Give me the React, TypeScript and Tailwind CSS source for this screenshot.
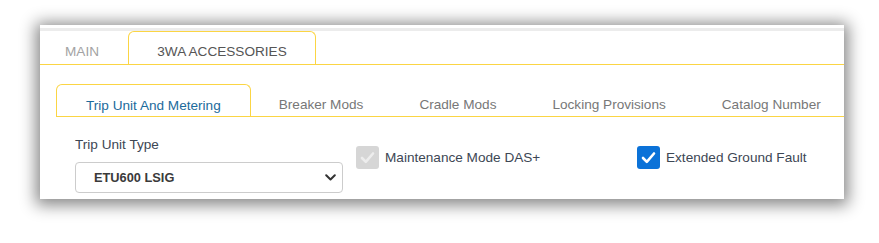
import React from 'react';

const subTabs = ['Breaker Mods', 'Cradle Mods', 'Locking Provisions', 'Catalog Number'];

const CheckMark = ({ color }: { color: string }) => (
  <svg width="15" height="13" viewBox="0 0 15 13" fill="none">
    <path d="M2 7l3.8 3.8L13 2.5" stroke={color} strokeWidth="2.6" strokeLinecap="round" strokeLinejoin="round" />
  </svg>
);

const Check = ({ checked, disabled, label }: { checked: boolean; disabled?: boolean; label: string }) => (
  <div className="flex items-center gap-[6px]">
    <span
      className={
        disabled
          ? 'w-[23px] h-[23px] rounded-[3px] bg-[#d6d6d6] flex items-center justify-center'
          : 'w-[23px] h-[23px] rounded-[3px] bg-[#0b72d8] flex items-center justify-center'
      }
    >
      {checked && <CheckMark color={disabled ? '#ededed' : '#ffffff'} />}
    </span>
    <span className="text-[#3d4754] leading-[16px] whitespace-nowrap">{label}</span>
  </div>
);

export default function App() {
  return (
    <div className="min-h-screen bg-white pt-[25px] pl-[40px] font-['Liberation_Sans',Arial,sans-serif] text-[13.6px]">
      <div className="w-[804px] bg-white shadow-[0_2px_15px_4px_rgba(0,0,0,0.48)]">
        <div className="h-[3px]" />
        <div className="h-[3px] bg-[#ececec]" />

        {/* top level tabs */}
        <div className="flex border-b border-[#fbd544] h-[34px]">
          <div className="px-[25px] pt-[13px] leading-[16px] text-[#a3a3a3] whitespace-nowrap">MAIN</div>
          <div className="ml-[4px] w-[188px] text-center border-t border-x border-[#fbd544] rounded-t-[6px] pt-[12px] leading-[16px] text-[#555555] whitespace-nowrap">
            3WA ACCESSORIES
          </div>
        </div>

        {/* sub tabs */}
        <div className="pl-[16px] pt-[19px]">
          <div className="flex border-b border-[#fbd544] h-[33px] overflow-hidden">
            <div className="shrink-0 whitespace-nowrap px-[29px] border-t border-x border-[#fbd544] rounded-t-[6px] pt-[13px] leading-[16px] text-[#1c6b9c]">
              Trip Unit And Metering
            </div>
            {subTabs.map((t) => (
              <div key={t} className="shrink-0 whitespace-nowrap px-[28px] pt-[13px] leading-[16px] text-[#777777]">
                {t}
              </div>
            ))}
          </div>
        </div>

        {/* fields */}
        <div className="flex px-[35px] pt-[20px] pb-[6px]">
          <div className="w-[268px] shrink-0">
            <div className="leading-[16px] text-[#3d4754]">Trip Unit Type</div>
            <div className="mt-[9px] h-[31px] border border-[#cccccc] rounded-[4px] flex items-center justify-between pl-[18px] pr-[6px]">
              <span className="text-[12.8px] font-bold text-[#3a3a3a]">ETU600 LSIG</span>
              <svg width="11" height="7" viewBox="0 0 11 7" fill="none">
                <path d="M1.2 1.2l4.3 4.3 4.3-4.3" stroke="#333333" strokeWidth="2" strokeLinecap="round" strokeLinejoin="round" />
              </svg>
            </div>
          </div>
          <div className="ml-[13px] mt-[9px] w-[281px] shrink-0">
            <Check checked disabled label="Maintenance Mode DAS+" />
          </div>
          <div className="mt-[9px]">
            <Check checked label="Extended Ground Fault" />
          </div>
        </div>
      </div>
    </div>
  );
}
